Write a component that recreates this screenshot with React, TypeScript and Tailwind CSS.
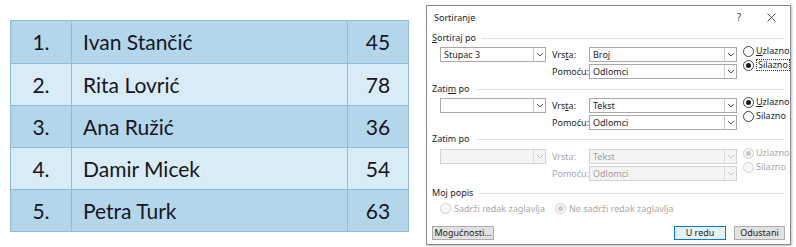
import React from 'react'

const rows = [
  { n: '1.', name: 'Ivan Stančić', score: 45 },
  { n: '2.', name: 'Rita Lovrić', score: 78 },
  { n: '3.', name: 'Ana Ružić', score: 36 },
  { n: '4.', name: 'Damir Micek', score: 54 },
  { n: '5.', name: 'Petra Turk', score: 63 },
]

function Chevron({ disabled }: { disabled?: boolean }) {
  return (
    <svg width="8" height="5" viewBox="0 0 8 5" className="block">
      <path d="M1 1 L4 4 L7 1" fill="none" stroke={disabled ? '#c4c4c4' : '#555'} strokeWidth="1" />
    </svg>
  )
}

function Select({
  value,
  width,
  disabled,
}: {
  value: string
  width: string
  disabled?: boolean
}) {
  return (
    <div
      className={`flex h-[15px] ${width} items-stretch border ${
        disabled ? 'border-[#d3d3d3] bg-[#f4f4f4] text-[#a0a0a0]' : 'border-[#a8a8a8] bg-white text-[#1e1e1e]'
      }`}
    >
      <div className="flex flex-1 items-center pl-[3px] leading-none">{value}</div>
      <div
        className={`flex w-[12px] items-center justify-center border-l ${
          disabled ? 'border-[#dcdcdc]' : 'border-[#c8c8c8]'
        }`}
      >
        <Chevron disabled={disabled} />
      </div>
    </div>
  )
}

function Radio({ checked, disabled }: { checked?: boolean; disabled?: boolean }) {
  return (
    <span
      className={`flex h-[11px] w-[11px] items-center justify-center rounded-full border ${
        disabled ? 'border-[#d0d0d0] bg-[#f7f7f7]' : 'border-[#444] bg-white'
      }`}
    >
      {checked && (
        <span className={`h-[5px] w-[5px] rounded-full ${disabled ? 'bg-[#c8c8c8]' : 'bg-[#1a1a1a]'}`} />
      )}
    </span>
  )
}

function GroupHeader({ children }: { children: React.ReactNode }) {
  return (
    <div className="flex h-[14px] items-center gap-[6px] pr-[6px]">
      <span>{children}</span>
      <div className="h-px flex-1 bg-[#e3e3e3]" />
    </div>
  )
}

function SortGroup({
  title,
  column,
  kind,
  checked,
  disabled,
  focusSecond,
  gap,
}: {
  title: React.ReactNode
  column: string
  kind: string
  checked: 'up' | 'down'
  disabled?: boolean
  focusSecond?: boolean
  gap: string
}) {
  const lab = disabled ? 'text-[#a8a8a8]' : 'text-[#1e1e1e]'
  return (
    <div className="flex flex-col">
      <GroupHeader>{title}</GroupHeader>
      <div className={`${gap} flex pl-[8px]`}>
        <Select value={column} width="w-[106px]" disabled={disabled} />
        <div className="ml-[6px] flex flex-col gap-[2px]">
          <div className="flex items-center">
            <span className={`w-[37px] ${lab}`}>
              {disabled ? 'Vrsta:' : <>Vrs<u>t</u>a:</>}
            </span>
            <Select value={kind} width="w-[148px]" disabled={disabled} />
          </div>
          <div className="flex items-center">
            <span className={`w-[37px] ${lab}`}>Pomoću:</span>
            <Select value="Odlomci" width="w-[148px]" disabled={disabled} />
          </div>
        </div>
        <div className="ml-[6px] -mt-[2px] flex flex-col gap-[2px]">
          <div className="flex h-[12px] items-center gap-[2px]">
            <Radio checked={checked === 'up'} disabled={disabled} />
            <span className={lab}>
              <u className={disabled ? 'no-underline' : ''}>U</u>zlazno
            </span>
          </div>
          <div className="flex h-[12px] items-center gap-[2px]">
            <Radio checked={checked === 'down'} disabled={disabled} />
            <span
              className={`${lab} ${focusSecond ? 'border border-dotted border-[#333] px-[1px] leading-[10px]' : ''}`}
            >
              Silazno
            </span>
          </div>
        </div>
      </div>
    </div>
  )
}

function Dialog() {
  return (
    <div
      className="ml-[17px] mt-[5px] flex h-[240px] w-[365px] flex-col border border-[#8a8a8a] bg-white text-[9px] text-[#1e1e1e] shadow-[1px_1px_2px_rgba(0,0,0,0.25)]"
      style={{ fontFamily: '"Noto Sans", "Open Sans", sans-serif' }}
    >
      <div className="flex h-[23px] items-center pl-[7px]">
        <span className="flex-1">Sortiranje</span>
        <span className="mr-[26px] text-[10px] text-[#444]">?</span>
        <svg width="9" height="9" viewBox="0 0 9 9" className="mr-[14px]">
          <path d="M0.5 0.5 L8.5 8.5 M8.5 0.5 L0.5 8.5" stroke="#444" strokeWidth="0.9" />
        </svg>
      </div>
      <div className="flex flex-1 flex-col pl-[5px]">
        <div className="mt-[2px]">
          <SortGroup
            title={
              <>
                <u>S</u>ortiraj po
              </>
            }
            column="Stupac 3"
            kind="Broj"
            checked="down"
            focusSecond
            gap="mt-[2px]"
          />
        </div>
        <div className="mt-[3px]">
          <SortGroup
            title={
              <>
                Zati<u>m</u> po
              </>
            }
            column=""
            kind="Tekst"
            checked="up"
            gap="mt-[2px]"
          />
        </div>
        <div className="mt-[2px]">
          <SortGroup title="Zatim po" column="" kind="Tekst" checked="up" disabled gap="mt-[3px]" />
        </div>
        <div className="mt-[5px]">
          <GroupHeader>Moj popis</GroupHeader>
          <div className="mt-[2px] flex items-center pl-[8px] text-[#a8a8a8]">
            <Radio disabled />
            <span className="ml-[3px]">Sadrži redak zaglavlja</span>
            <span className="ml-[10px]">
              <Radio checked disabled />
            </span>
            <span className="ml-[3px]">Ne sadrži redak zaglavlja</span>
          </div>
        </div>
        <div className="mt-[10px] flex items-center pr-[5px]">
          <div className="flex h-[14px] w-[62px] items-center justify-center border border-[#adadad] bg-[#e1e1e1]">
            Mo<u>g</u>ućnosti...
          </div>
          <div className="flex-1" />
          <div className="flex h-[14px] w-[52px] items-center justify-center border border-[#0078d7] bg-[#e5f1fb]">
            U redu
          </div>
          <div className="ml-[8px] flex h-[14px] w-[51px] items-center justify-center border border-[#adadad] bg-[#e1e1e1]">
            Odustani
          </div>
        </div>
      </div>
    </div>
  )
}

function ScoreTable() {
  return (
    <div
      className="ml-[10px] mt-[20px] flex w-[399px] flex-col border border-[#8dbddb] text-[21px] text-[#161623]"
      style={{ fontFamily: 'Lato, "Open Sans", sans-serif' }}
    >
      {rows.map((r, i) => (
        <div
          key={r.n}
          className={`flex h-[42px] items-center ${i > 0 ? 'border-t border-[#8dbddb]' : ''} ${
            i % 2 === 0 ? 'bg-[#b3d6ea]' : 'bg-[#d8ebf6]'
          }`}
        >
          <div className="flex h-full w-[61px] items-center justify-center border-r border-[#8dbddb]">{r.n}</div>
          <div className="flex h-full flex-1 items-center border-r border-[#8dbddb] pl-[11px]">{r.name}</div>
          <div className="flex h-full w-[60px] items-center justify-center">{r.score}</div>
        </div>
      ))}
    </div>
  )
}

export default function App() {
  return (
    <div className="flex h-[247px] w-[796px] items-start bg-white">
      <ScoreTable />
      <Dialog />
    </div>
  )
}
